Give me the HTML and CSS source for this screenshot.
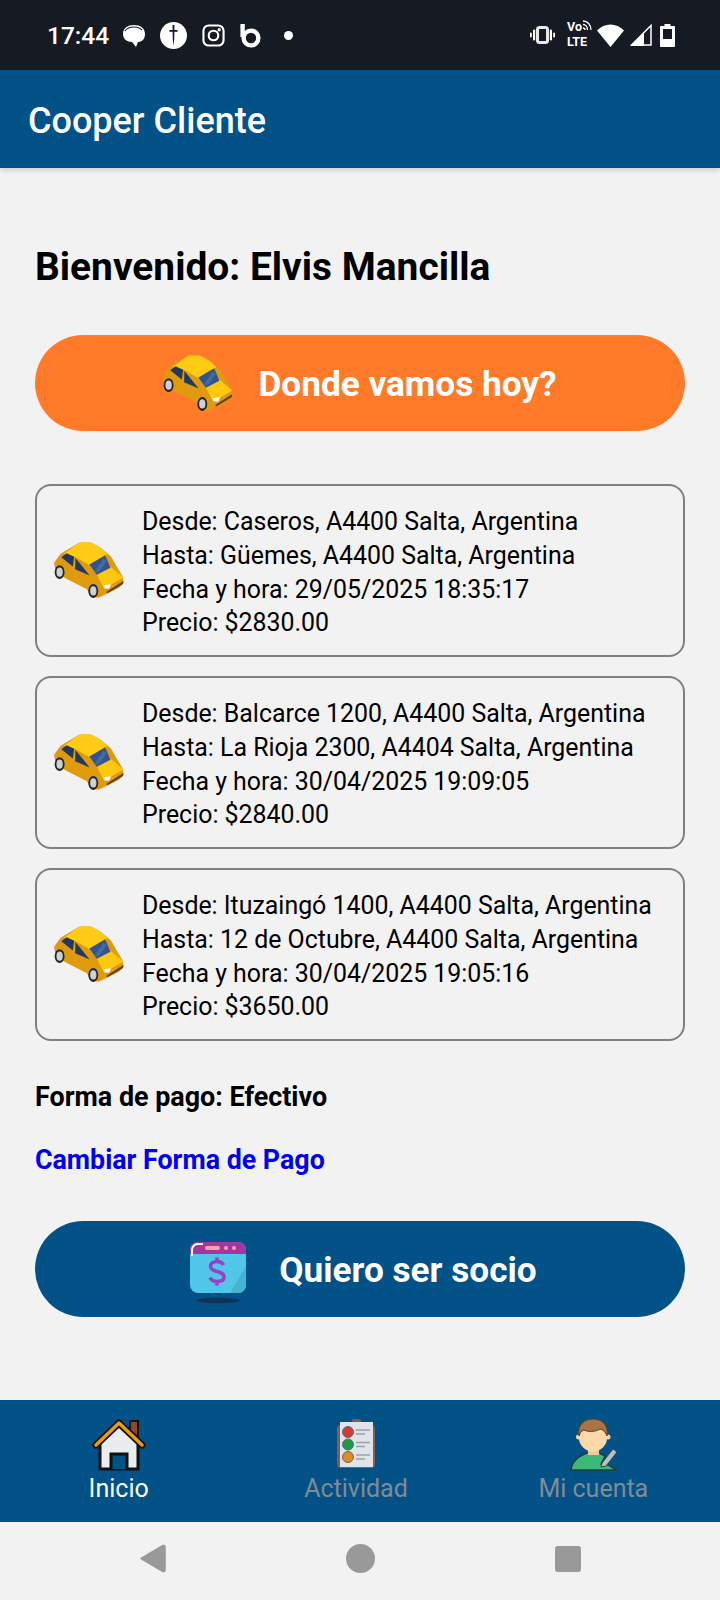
FILE: index.html
```html
<!DOCTYPE html>
<html lang="es">
<head>
  <meta charset="UTF-8" />
  <meta name="viewport" content="width=device-width, initial-scale=1.0"/>
  <title>Cooper Cliente</title>
  <link rel="stylesheet" href="styles.css">
</head>
<body>
  <svg class="defs" width="0" height="0">
    <defs>
      <symbol id="car" viewBox="28 28 212 170">
        <path d="M28 90 L48 62 L105 28 L140 28 L170 45 L200 70 L235 130 L240 150 L225 165 L165 195 L140 195 L128 170 L60 135 L35 120 Z" fill="#e09a0e"/>
        <path d="M58 62 L105 28 L140 28 L170 45 L190 64 L135 97 L93 72 Z" fill="#ffcb14"/>
        <path d="M198 100 L238 134 L180 168 L158 126 Z" fill="#ffc810"/>
        <path d="M50 73 L66 61 L89 71 L85 101 Z" fill="#21395f"/>
        <path d="M93 75 L136 128 L92 109 Z" fill="#21395f"/>
        <path d="M135 95 L183 67 L199 105 L158 126 Z" fill="#31558f"/>
        <path d="M150 118 L178 78 L188 84 L165 116 Z" fill="#46699f"/>
        <path d="M178 158 L201 155 L195 168 L182 167 Z" fill="#fff"/>
        <path d="M186 178 L238 145 L236 155 L190 182 Z" fill="#5e3f08"/>
        <ellipse cx="45" cy="118" rx="15" ry="21" fill="#262626"/>
        <ellipse cx="45" cy="118" rx="9.500" ry="14" fill="#ccd1d8"/>
        <ellipse cx="147" cy="175" rx="15" ry="21" fill="#262626"/>
        <ellipse cx="147" cy="175" rx="9.500" ry="14" fill="#ccd1d8"/>
      </symbol>
    </defs>
  </svg>

  <div class="phone">
    <!-- barra de estado -->
    <div class="status-bar">
      <span class="clock">17:44</span>
      <div class="status-apps">
        <svg width="22" height="23" viewBox="0 0 22 23"><path d="M0 10C0 4 5 1 11 1s11 3 11 9-4 8-7 8l-2 5-4-5C4 18 0 15 0 10z" fill="#fff"/><path d="M2 7c2-3 6-4 9-4s6 1 8 3" fill="none" stroke="#161a22" stroke-width="1.2"/></svg>
        <svg width="27" height="27" viewBox="0 0 27 27"><circle cx="13.5" cy="13.5" r="13.5" fill="#fff"/><path d="M12.6 3h1.8v5h3.2v1.8h-3.2l-.2 8-.7 6-.7-6-.2-8H9.4V8h3.2z" fill="#161a22"/></svg>
        <svg width="23" height="23" viewBox="0 0 24 24" fill="none" stroke="#fff" stroke-width="2.2"><rect x="1.5" y="1.5" width="21" height="21" rx="5.5"/><circle cx="12" cy="12" r="5"/><circle cx="18" cy="6" r=".6" fill="#fff"/></svg>
        <svg width="21" height="25" viewBox="0 0 21 25" fill="none" stroke="#fff" stroke-width="4.4"><path d="M2.6 1v13"/><circle cx="11" cy="15" r="7.4"/></svg>
        <span class="dot"></span>
      </div>
      <div class="status-sys">
        <svg width="25" height="18" viewBox="0 0 25 18" fill="#fff"><rect x="7.5" y="1.5" width="10" height="15" rx="2" fill="none" stroke="#e8e8e8" stroke-width="3"/><rect x="3" y="3.5" width="2.2" height="11" rx="1"/><rect x="19.8" y="3.5" width="2.2" height="11" rx="1"/><rect x="0" y="6.5" width="1.8" height="5" rx=".9"/><rect x="23.2" y="6.5" width="1.8" height="5" rx=".9"/></svg>
        <div class="volte">
          <div class="volte-top">
            <span>Vo</span>
            <svg width="10" height="11" viewBox="0 0 10 11" fill="none" stroke="#fff" stroke-width="1.3"><path d="M1 1c4.500 0 8 3.500 8 9M1 4.500c2.500 0 4.500 2.200 4.500 5.500M1 8c1 0 2 1 2 2"/></svg>
          </div>
          <span>LTE</span>
        </div>
        <svg class="wifi" width="27" height="23" viewBox="0 0 27 23"><path d="M0 6.500c7.500-8 19.500-8 27 0L13.500 23z" fill="#fff"/></svg>
        <svg width="22" height="22" viewBox="0 0 22 22"><path d="M21 1.500V21H1.500z" fill="none" stroke="#fff" stroke-width="1.500"/><path d="M14 9v13H1z" fill="#fff"/></svg>
        <svg class="battery" width="15" height="23" viewBox="0 0 15 23"><path d="M4.500 0h6v2H14a1 1 0 0 1 1 1v19a1 1 0 0 1-1 1H1a1 1 0 0 1-1-1V3a1 1 0 0 1 1-1h3.500z" fill="#fff"/><rect x="3" y="5" width="9" height="10" fill="#161a22"/></svg>
      </div>
    </div>

    <header class="app-bar">Cooper Cliente</header>

    <main class="content">
      <h1 class="welcome">Bienvenido: Elvis Mancilla</h1>

      <a class="pill pill-orange">
        <svg class="pill-car"><use href="#car"/></svg>
        <span>Donde vamos hoy?</span>
      </a>

      <div class="trips">
        <div class="trip">
          <svg class="trip-car"><use href="#car"/></svg>
          <div class="trip-text">
            <div>Desde: Caseros, A4400 Salta, Argentina</div>
            <div>Hasta: Güemes, A4400 Salta, Argentina</div>
            <div>Fecha y hora: 29/05/2025 18:35:17</div>
            <div>Precio: $2830.00</div>
          </div>
        </div>
        <div class="trip">
          <svg class="trip-car"><use href="#car"/></svg>
          <div class="trip-text">
            <div>Desde: Balcarce 1200, A4400 Salta, Argentina</div>
            <div>Hasta: La Rioja 2300, A4404 Salta, Argentina</div>
            <div>Fecha y hora: 30/04/2025 19:09:05</div>
            <div>Precio: $2840.00</div>
          </div>
        </div>
        <div class="trip">
          <svg class="trip-car"><use href="#car"/></svg>
          <div class="trip-text">
            <div>Desde: Ituzaingó 1400, A4400 Salta, Argentina</div>
            <div>Hasta: 12 de Octubre, A4400 Salta, Argentina</div>
            <div>Fecha y hora: 30/04/2025 19:05:16</div>
            <div>Precio: $3650.00</div>
          </div>
        </div>
      </div>

      <p class="pay">Forma de pago: Efectivo</p>
      <a class="pay-link">Cambiar Forma de Pago</a>

      <a class="pill pill-blue">
        <svg class="pill-money" viewBox="0 0 56 62">
          <ellipse cx="28" cy="58.500" rx="22" ry="2.800" fill="#0f3557"/>
          <rect x="0" y="0" width="56" height="51" rx="8" fill="#50c6e9"/>
          <path d="M40 51 L56 24 V43 a8 8 0 0 1-8 8z" fill="#45b4d2"/>
          <path d="M0 12 V8 a8 8 0 0 1 8-8 h40 a8 8 0 0 1 8 8 v4z" fill="#a5359f"/>
          <rect x="15" y="4" width="15" height="4" rx="2" fill="#f7a7a0"/>
          <circle cx="36" cy="6" r="2" fill="#f7a7a0"/>
          <circle cx="44" cy="6" r="2" fill="#f7a7a0"/>
          <path d="M2 14 V8 a6 6 0 0 1 6-6 h5" fill="none" stroke="#fff" stroke-width="2"/>
          <path d="M33.500 23 c-1-2-3-3.500-6.500-3.500 c-4 0-6.500 2-6.500 5 c0 6.500 13.500 3.500 13.500 10.500 c0 3-2.500 4.500-6.500 4.500 c-4 0-6.500-1.500-7.500-4 M27 15.500 v4 M27 40 v3.500" fill="none" stroke="#9b3fc4" stroke-width="3.500"/>
        </svg>
        <span>Quiero ser socio</span>
      </a>
    </main>

    <!-- menu inferior -->
    <nav class="tabs">
      <div class="tab tab-active">
        <svg class="tab-icon" viewBox="0 0 54 54">
          <path d="M38 3h8v16h-8z" fill="#8a4a24" stroke="#111" stroke-width="2"/>
          <path d="M8 25 L27 8 L46 25 V51 H8 Z" fill="#e9edf0" stroke="#111" stroke-width="3"/>
          <path d="M19 51 V36 H35 V51" fill="#025187" stroke="#111" stroke-width="3"/>
          <path d="M4 27 L27 5 L50 27" fill="none" stroke="#111" stroke-width="7" stroke-linejoin="round" stroke-linecap="round"/>
          <path d="M4 27 L27 5 L50 27" fill="none" stroke="#ec9a10" stroke-width="3.500" stroke-linejoin="round" stroke-linecap="round"/>
        </svg>
        <span>Inicio</span>
      </div>
      <div class="tab">
        <svg class="tab-icon" viewBox="0 0 54 54">
          <rect x="8" y="7" width="38" height="43" rx="4" fill="#8a5a50"/>
          <rect x="23" y="1" width="9" height="6" rx="2" fill="#8a5a50"/>
          <rect x="11" y="4" width="33" height="45" fill="#dfe4e8"/>
          <circle cx="19" cy="14" r="5.500" fill="#d23a3a" stroke="#6a6a6a"/>
          <circle cx="19" cy="26.500" r="5.500" fill="#1a9a4a" stroke="#6a6a6a"/>
          <circle cx="19" cy="39" r="5.500" fill="#e08a20" stroke="#6a6a6a"/>
          <path d="M27 12h14M27 16h9M27 24.500h14M27 28.500h9M27 37h14M27 41h9" stroke="#9aa0a8" stroke-width="1.500"/>
        </svg>
        <span>Actividad</span>
      </div>
      <div class="tab">
        <svg class="tab-icon" viewBox="0 0 54 54">
          <path d="M5 52 C6 43 13 38 21 35 H33 C35 36 37 37 39 38 L35 46 L42 47 L50 52 Z" fill="#3cb878" stroke="#2b3a40" stroke-width="1.400"/>
          <rect x="22" y="28" width="11" height="9" fill="#f3c99b"/>
          <circle cx="12.500" cy="19" r="2.500" fill="#fbd5a6"/>
          <circle cx="42" cy="19" r="2.500" fill="#fbd5a6"/>
          <ellipse cx="27" cy="20" rx="14" ry="13.500" fill="#fcd7a8"/>
          <path d="M13 18 C11 6 19 1 27 1 C35 1 43 6 41 18 C39 13 37 12 34 11 C30 14 21 14 18 12 C15 13 14 15 13 18 Z" fill="#a87444" stroke="#5a3e2a"/>
          <path d="M36 45 L47 31 L51 34 L40 48 L35 49 Z" fill="#b8bec4" stroke="#3a4650"/>
        </svg>
        <span>Mi cuenta</span>
      </div>
    </nav>

    <div class="sys-nav">
      <svg width="27" height="29" viewBox="0 0 27 29"><path d="M2 14.500 L24 1.500 Q26 1 26 3 V26 Q26 28 24 27.500 Z" fill="#999" stroke="#999" stroke-width="1.500" stroke-linejoin="round"/></svg>
      <span class="sys-home"></span>
      <span class="sys-recent"></span>
    </div>
  </div>
</body>
</html>
```

FILE: styles.css
```css
* { box-sizing: border-box; }
body {
  margin: 0;
  font-family: Roboto, 'Noto Sans', sans-serif;
  background: #f2f2f2;
  color: #000;
}
a { text-decoration: none; color: inherit; }
.defs { display: block; height: 0; }

.phone {
  width: 720px;
  height: 1600px;
  display: flex;
  flex-direction: column;
  overflow: hidden;
}

/* barra de estado */
.status-bar {
  height: 70px;
  background: #161a22;
  color: #fff;
  display: flex;
  align-items: center;
  padding: 0 45px 0 47px;
}
.clock { font-size: 24.5px; font-weight: 500; margin-right: 14px; }
.status-apps { display: flex; align-items: center; gap: 15px; }
.dot { width: 9px; height: 9px; border-radius: 50%; background: #fff; margin-left: 8px; }
.status-sys { display: flex; align-items: center; gap: 6px; margin-left: auto; }
.volte {
  width: 25px;
  margin: 0 -1px 0 6px;
  display: flex;
  flex-direction: column;
  font-size: 12.5px;
  line-height: 14.6px;
  font-weight: 700;
}
.volte-top { display: flex; align-items: flex-start; }
.battery { margin-left: 2px; }

.app-bar {
  height: 98px;
  background: #025187;
  color: #fff;
  font-size: 36px;
  font-weight: 500;
  display: flex;
  align-items: center;
  padding: 3px 0 0 28px;
  box-shadow: 0 2px 5px rgba(0,0,0,0.15);
}

.content {
  flex: 1;
  padding: 0 35px;
}
.welcome {
  margin: 78px 0 0;
  font-size: 38.9px;
  line-height: 42px;
  font-weight: 700;
}

.pill {
  height: 96px;
  border-radius: 48px;
  color: #fff;
  font-size: 35.2px;
  font-weight: 700;
  display: flex;
  align-items: center;
  justify-content: center;
}
.pill span { margin-top: 2px; }
.pill-orange { background: #ff7b29; margin-top: 47px; gap: 25px; }
.pill-blue { background: #025187; margin-top: 44px; gap: 33px; padding-left: 7px; }
.pill-car { width: 70px; height: 57px; }
.pill-money { width: 56px; height: 62px; margin-top: 8px; }

.trips {
  margin-top: 53px;
  display: flex;
  flex-direction: column;
  gap: 19px;
}
.trip {
  height: 173px;
  border: 2px solid #808080;
  border-radius: 16px;
  display: flex;
  align-items: center;
  padding-left: 17px;
  gap: 18px;
}
.trip-car { width: 70px; height: 57px; flex: none; }
.trip-text { font-size: 24.9px; line-height: 33.7px; padding-top: 4px; }

.pay {
  margin: 39px 0 0;
  font-size: 26.9px;
  line-height: 34px;
  font-weight: 700;
}
.pay-link {
  display: block;
  margin-top: 29px;
  font-size: 26.8px;
  line-height: 34px;
  font-weight: 700;
  color: #0000ee;
}

/* menu inferior */
.tabs {
  height: 122px;
  background: #025187;
  display: flex;
  padding-right: 8px;
}
.tab {
  flex: 1;
  display: flex;
  flex-direction: column;
  align-items: center;
  padding-top: 18px;
  font-size: 25px;
  color: #808b95;
}
.tab span { line-height: 30px; margin-top: 2px; }
.tab-active { color: #fff; }
.tab-icon { width: 54px; height: 54px; }

.sys-nav {
  height: 78px;
  background: #f2f2f2;
  display: flex;
  align-items: center;
  justify-content: space-between;
  padding: 0 139px 5px;
}
.sys-home { width: 29px; height: 29px; border-radius: 50%; background: #999; }
.sys-recent { width: 26px; height: 26px; border-radius: 3px; background: #999; }
```
